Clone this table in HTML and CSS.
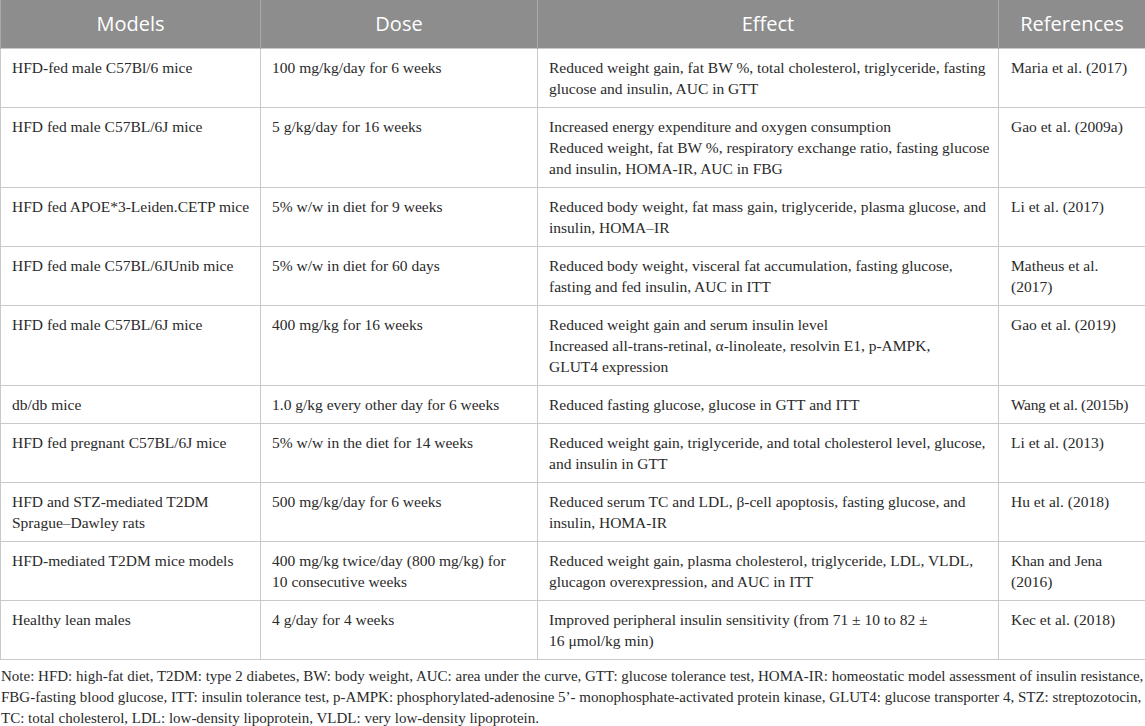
FILE: index.html
```html
<!DOCTYPE html>
<html>
<head>
<meta charset="utf-8">
<link rel="stylesheet" href="styles.css">
</head>
<body>
<table class="tbl">
  <colgroup>
    <col class="c1"><col class="c2"><col class="c3"><col class="c4">
  </colgroup>
  <thead>
    <tr><th>Models</th><th>Dose</th><th>Effect</th><th>References</th></tr>
  </thead>
  <tbody>
    <tr><td>HFD-fed male C57Bl/6 mice</td><td>100 mg/kg/day for 6 weeks</td><td>Reduced weight gain, fat BW %, total cholesterol, triglyceride, fasting<br>glucose and insulin, AUC in GTT</td><td class="ref">Maria et al. (2017)</td></tr>
    <tr><td>HFD fed male C57BL/6J mice</td><td>5 g/kg/day for 16 weeks</td><td>Increased energy expenditure and oxygen consumption<br>Reduced weight, fat BW %, respiratory exchange ratio, fasting glucose<br>and insulin, HOMA-IR, AUC in FBG</td><td class="ref">Gao et al. (2009a)</td></tr>
    <tr><td>HFD fed APOE*3-Leiden.CETP mice</td><td>5% w/w in diet for 9 weeks</td><td>Reduced body weight, fat mass gain, triglyceride, plasma glucose, and<br>insulin, HOMA–IR</td><td class="ref">Li et al. (2017)</td></tr>
    <tr><td>HFD fed male C57BL/6JUnib mice</td><td>5% w/w in diet for 60 days</td><td>Reduced body weight, visceral fat accumulation, fasting glucose,<br>fasting and fed insulin, AUC in ITT</td><td class="ref">Matheus et al.<br>(2017)</td></tr>
    <tr><td>HFD fed male C57BL/6J mice</td><td>400 mg/kg for 16 weeks</td><td>Reduced weight gain and serum insulin level<br>Increased all-trans-retinal, α-linoleate, resolvin E1, p-AMPK,<br>GLUT4 expression</td><td class="ref">Gao et al. (2019)</td></tr>
    <tr><td>db/db mice</td><td>1.0 g/kg every other day for 6 weeks</td><td>Reduced fasting glucose, glucose in GTT and ITT</td><td class="ref tight">Wang et al. (2015b)</td></tr>
    <tr><td>HFD fed pregnant C57BL/6J mice</td><td>5% w/w in the diet for 14 weeks</td><td>Reduced weight gain, triglyceride, and total cholesterol level, glucose,<br>and insulin in GTT</td><td class="ref">Li et al. (2013)</td></tr>
    <tr><td>HFD and STZ-mediated T2DM<br>Sprague–Dawley rats</td><td>500 mg/kg/day for 6 weeks</td><td>Reduced serum TC and LDL, β-cell apoptosis, fasting glucose, and<br>insulin, HOMA-IR</td><td class="ref">Hu et al. (2018)</td></tr>
    <tr><td>HFD-mediated T2DM mice models</td><td>400 mg/kg twice/day (800 mg/kg) for<br>10 consecutive weeks</td><td>Reduced weight gain, plasma cholesterol, triglyceride, LDL, VLDL,<br>glucagon overexpression, and AUC in ITT</td><td class="ref">Khan and Jena<br>(2016)</td></tr>
    <tr><td>Healthy lean males</td><td>4 g/day for 4 weeks</td><td>Improved peripheral insulin sensitivity (from 71 ± 10 to 82 ±<br>16 μmol/kg min)</td><td class="ref">Kec et al. (2018)</td></tr>
  </tbody>
</table>
<p class="note">Note: HFD: high-fat diet, T2DM: type 2 diabetes, BW: body weight, AUC: area under the curve, GTT: glucose tolerance test, HOMA-IR: homeostatic model assessment of insulin resistance,<br>FBG-fasting blood glucose, ITT: insulin tolerance test, p-AMPK: phosphorylated-adenosine 5’- monophosphate-activated protein kinase, GLUT4: glucose transporter 4, STZ: streptozotocin,<br>TC: total cholesterol, LDL: low-density lipoprotein, VLDL: very low-density lipoprotein.</p>
</body>
</html>
```

FILE: styles.css
```css
html, body {
  margin: 0;
  padding: 0;
  background: #ffffff;
}

body {
  width: 1145px;
  font-family: "Liberation Serif", "Times New Roman", serif;
  color: #2a2a2a;
}

.tbl {
  width: 1145px;
  border-collapse: collapse;
  table-layout: fixed;
}

.c1 { width: 260px; }
.c2 { width: 277px; }
.c3 { width: 461px; }
.c4 { width: 147px; }

.tbl th {
  height: 48px;
  padding: 0 8px;
  background: #8d8d8d;
  color: #ffffff;
  font-family: "Open Sans", "Noto Sans", sans-serif;
  font-weight: 400;
  font-size: 20px;
  text-align: center;
  vertical-align: middle;
  border-left: 1px solid #a9a9a9;
  border-right: 1px solid #a9a9a9;
  box-sizing: border-box;
}

.tbl td {
  padding: 8px 6px 8px 11px;
  font-size: 15.5px;
  line-height: 21px;
  vertical-align: top;
  text-align: left;
  border: 1px solid #c9c9c9;
  white-space: nowrap;
}

.tbl td.ref {
  padding-left: 12px;
  padding-right: 4px;
}

.tbl td.tight {
  letter-spacing: -0.3px;
}

.note {
  margin: 6px 0 0 1px;
  font-size: 15px;
  line-height: 21px;
  white-space: nowrap;
}
```
